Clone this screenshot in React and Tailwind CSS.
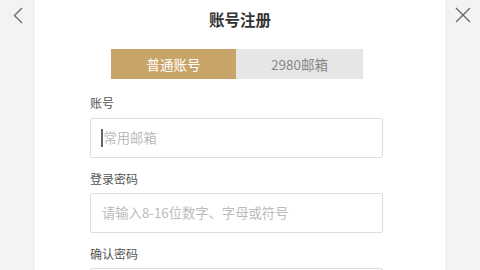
export default function App() {
  const font = { fontFamily: '"Noto Sans CJK SC", "Noto Sans", sans-serif' }
  return (
    <div className="flex h-[270px] w-[480px] overflow-hidden bg-white" style={font}>
      {/* 左侧栏 */}
      <div className="flex w-[35px] shrink-0 justify-center bg-[#f3f3f2] pt-[7px]">
        <svg width="12" height="17" viewBox="0 0 12 17" fill="none">
          <path d="M10 1 L2.5 8.5 L10 16" stroke="#666" strokeWidth="1.3" />
        </svg>
      </div>

      {/* 主体 */}
      <div className="flex flex-1 flex-col">
        <div className="pt-[7px] text-center text-[15.5px] font-bold leading-[24px] text-[#333]">账号注册</div>

        <div className="mt-[18px] ml-[76px] flex">
          <div className="flex h-[30px] w-[125px] items-center justify-center bg-[#c9a468] text-[13.5px] text-white">普通账号</div>
          <div className="flex h-[30px] w-[127px] items-center justify-center bg-[#e6e6e6] text-[13.5px] text-[#888]">2980邮箱</div>
        </div>

        <div className="pl-[55px] pr-[62px]">
          <div className="mt-[15px] text-[12px] leading-[18px] text-[#555]">账号</div>
          <div className="mt-[6px] flex h-[40px] items-center rounded-[2px] border border-[#dedede] px-[10px]">
            <span className="mr-[1px] h-[18px] w-[1.5px] bg-[#666]" />
            <span className="text-[13.3px] text-[#bbb]">常用邮箱</span>
          </div>

          <div className="mt-[12px] text-[12px] leading-[18px] text-[#555]">登录密码</div>
          <div className="mt-[5px] flex h-[40px] items-center rounded-[2px] border border-[#dedede] px-[11px]">
            <span className="text-[13.3px] text-[#bbb]">请输入8-16位数字、字母或符号</span>
          </div>

          <div className="mt-[12px] text-[12px] leading-[18px] text-[#555]">确认密码</div>
          <div className="mt-[5px] flex h-[40px] items-center rounded-[2px] border border-[#dedede] px-[11px]" />
        </div>
      </div>

      {/* 右侧栏 */}
      <div className="flex w-[35px] shrink-0 justify-center bg-[#f3f3f2] pt-[7px]">
        <svg width="16" height="16" viewBox="0 0 16 16" fill="none">
          <path d="M1 1 L15 15 M15 1 L1 15" stroke="#666" strokeWidth="1.3" />
        </svg>
      </div>
    </div>
  )
}
